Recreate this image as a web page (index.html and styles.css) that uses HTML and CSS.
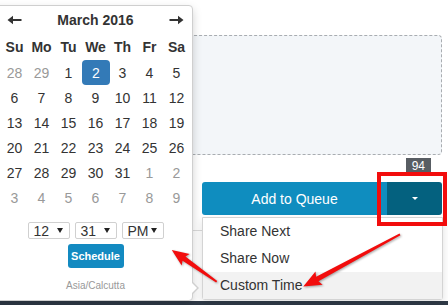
FILE: index.html
```html
<!DOCTYPE html>
<html lang="en">
<head>
    <meta charset="UTF-8">
    <meta name="viewport" content="width=device-width, initial-scale=1.0">
    <title>Schedule post</title>
    <link rel="stylesheet" href="styles.css">
</head>
<body>
    <div class="page">
        <!-- Composer on the right -->
        <div class="composer">
            <div class="dropzone"></div>
            <div class="counter-row"><span class="counter">94</span></div>
            <div class="queue-group">
                <button class="queue-btn" type="button">Add to Queue</button>
                <button class="queue-caret" type="button"><span class="caret"></span></button>
                <ul class="queue-menu">
                    <li>Share Next</li>
                    <li>Share Now</li>
                    <li class="active">Custom Time</li>
                </ul>
            </div>
            <div class="composer-footer"></div>
        </div>

        <!-- Date picker popup -->
        <div class="picker">
            <div class="picker-head">
                <span class="nav-arrow">
                    <svg width="15" height="10" viewBox="0 0 15 10"><path d="M0.5 5 L6 0.8 L6 4 L14.5 4 L14.5 6 L6 6 L6 9.2 Z" fill="#333"/></svg>
                </span>
                <strong class="month">March 2016</strong>
                <span class="nav-arrow">
                    <svg width="15" height="10" viewBox="0 0 15 10"><path d="M14.5 5 L9 0.8 L9 4 L0.5 4 L0.5 6 L9 6 L9 9.2 Z" fill="#333"/></svg>
                </span>
            </div>
            <div class="days">
                <b>Su</b><b>Mo</b><b>Tu</b><b>We</b><b>Th</b><b>Fr</b><b>Sa</b>
                <span class="old">28</span><span class="old">29</span><span>1</span><span class="selected">2</span><span>3</span><span>4</span><span>5</span>
                <span>6</span><span>7</span><span>8</span><span>9</span><span>10</span><span>11</span><span>12</span>
                <span>13</span><span>14</span><span>15</span><span>16</span><span>17</span><span>18</span><span>19</span>
                <span>20</span><span>21</span><span>22</span><span>23</span><span>24</span><span>25</span><span>26</span>
                <span>27</span><span>28</span><span>29</span><span>30</span><span>31</span><span class="old">1</span><span class="old">2</span>
                <span class="old">3</span><span class="old">4</span><span class="old">5</span><span class="old">6</span><span class="old">7</span><span class="old">8</span><span class="old">9</span>
            </div>
            <div class="time-row">
                <div class="fake-select"><span>12</span><i class="tri"></i></div>
                <div class="fake-select"><span>31</span><i class="tri"></i></div>
                <div class="fake-select"><span>PM</span><i class="tri"></i></div>
            </div>
            <button class="schedule-btn" type="button">Schedule</button>
            <div class="timezone">Asia/Calcutta</div>
        </div>

        <!-- Annotations -->
        <div class="highlight"></div>
        <svg class="annotations" width="448" height="301" viewBox="0 0 448 301">
            <polygon transform="translate(216.7 281.7) rotate(-144.8)" points="0,-1 40,-2.5 38,-7 55,0 38,7 40,2.5 0,1" fill="#f20d0d"/>
            <polygon transform="translate(400 234.3) rotate(151.6)" points="0,-1 94,-2.5 92,-7.5 110,0 92,7.5 94,2.5 0,1" fill="#f20d0d"/>
        </svg>
    </div>
    <div class="taskbar"></div>
</body>
</html>
```

FILE: styles.css
```css
/* Page basics */
body {
    margin: 0;
    height: 305px;
    overflow: hidden;
    display: flex;
    flex-direction: column;
    font-family: "Liberation Sans", Arial, sans-serif;
    color: #333;
    background-color: #fff;
}

.page {
    position: relative;
    flex: 1;
}

.taskbar {
    height: 4px;
    background-color: #2f3a47;
}

/* Composer */
.composer {
    margin-left: 150px;
    width: 292px;
    padding-top: 35px;
}

.dropzone {
    box-sizing: border-box;
    height: 120px;
    border: 1px dashed #a9adb1;
    border-radius: 4px;
    background-color: #f3f6f9;
}

.counter-row {
    display: flex;
    justify-content: flex-end;
    padding-right: 11px;
    margin-top: 3px;
}

.counter {
    height: 17px;
    line-height: 17px;
    padding: 0 6px;
    background-color: #585d63;
    color: #fff;
    font-size: 12px;
}

.queue-group {
    position: relative;
    display: flex;
    height: 33px;
    margin-top: 7px;
    margin-left: 52px;
}

.queue-group button {
    border: none;
    color: #fff;
    font-family: inherit;
    cursor: pointer;
}

.queue-btn {
    width: 185px;
    font-size: 14px;
    background-color: #0f8dbf;
    border-radius: 3px 0 0 3px;
}

.queue-caret {
    width: 55px;
    background-color: #04617f;
    border-radius: 0 3px 3px 0;
    display: flex;
    align-items: center;
    justify-content: center;
    padding: 0;
}

.caret {
    width: 0;
    height: 0;
    border-top: 3px solid #fff;
    border-left: 3px solid transparent;
    border-right: 3px solid transparent;
}

.queue-menu {
    position: absolute;
    top: 35px;
    left: 0;
    right: -1px;
    margin: 0;
    padding: 0;
    list-style-type: none;
    background-color: #fff;
    border: 1px solid #d4d4d4;
    border-radius: 0 0 3px 3px;
    box-shadow: 0 4px 8px rgba(0, 0, 0, 0.12);
}

.queue-menu li {
    height: 27px;
    line-height: 27px;
    padding-left: 17px;
    font-size: 14px;
    color: #333;
}

.queue-menu li.active {
    background-color: #f2f2f2;
}

.composer-footer {
    margin-top: 15px;
    border-top: 1px solid #dcdcdc;
}

/* Date picker popup */
.picker {
    position: absolute;
    left: -12px;
    top: 5px;
    box-sizing: border-box;
    width: 205px;
    height: 296px;
    padding: 0 2px 0 12px;
    background-color: #fff;
    border: 1px solid #cfcfcf;
    border-radius: 4px;
    box-shadow: 0 4px 10px rgba(0, 0, 0, 0.18);
    z-index: 2;
}

.picker::before,
.picker::after {
    content: "";
    position: absolute;
    width: 0;
    height: 0;
    border-top: 6px solid transparent;
    border-bottom: 6px solid transparent;
}

.picker::before {
    top: 276px;
    right: -7px;
    border-left: 6px solid #cfcfcf;
}

.picker::after {
    top: 277px;
    right: -5px;
    border-top-width: 5px;
    border-bottom-width: 5px;
    border-left: 5px solid #fff;
}

.picker-head {
    display: grid;
    grid-template-columns: 27px 1fr 27px;
    height: 28px;
    align-items: center;
}

.nav-arrow {
    display: flex;
    justify-content: center;
}

.month {
    text-align: center;
    font-size: 14px;
}

.days {
    display: grid;
    grid-template-columns: repeat(7, 27px);
    grid-template-rows: 26px repeat(6, 25px);
    font-size: 14px;
    text-align: center;
}

.days b,
.days span {
    display: flex;
    align-items: center;
    justify-content: center;
}

.days .old {
    color: #999;
}

.days .selected {
    background-color: #337ab7;
    color: #fff;
    border-radius: 4px;
    margin: 0 -1px 0 0;
}

.time-row {
    display: flex;
    justify-content: center;
    gap: 5px;
    margin-top: 12px;
}

.fake-select {
    box-sizing: border-box;
    width: 42px;
    height: 17px;
    display: flex;
    align-items: center;
    justify-content: space-between;
    padding: 0 6px 0 5px;
    border: 1px solid #d0d0d0;
    border-radius: 2px;
    font-size: 14px;
}

.tri {
    width: 0;
    height: 0;
    border-top: 5px solid #222;
    border-left: 3px solid transparent;
    border-right: 3px solid transparent;
}

.schedule-btn {
    display: block;
    width: 56px;
    height: 24px;
    margin: 5px auto 0;
    padding: 0;
    border: none;
    border-radius: 3px;
    background-color: #138ac1;
    color: #fff;
    font-family: inherit;
    font-size: 11px;
    font-weight: bold;
}

.timezone {
    margin-top: 11px;
    line-height: 14px;
    text-align: center;
    font-size: 10px;
    color: #999;
}

/* Red annotation marks */
.highlight {
    position: absolute;
    left: 377px;
    top: 172px;
    width: 70px;
    height: 54px;
    box-sizing: border-box;
    border: 4px solid #f20d0d;
    z-index: 3;
}

.annotations {
    position: absolute;
    left: 0;
    top: 0;
    z-index: 4;
    pointer-events: none;
    filter: drop-shadow(1px 1px 1px rgba(0, 0, 0, 0.35));
}
```
